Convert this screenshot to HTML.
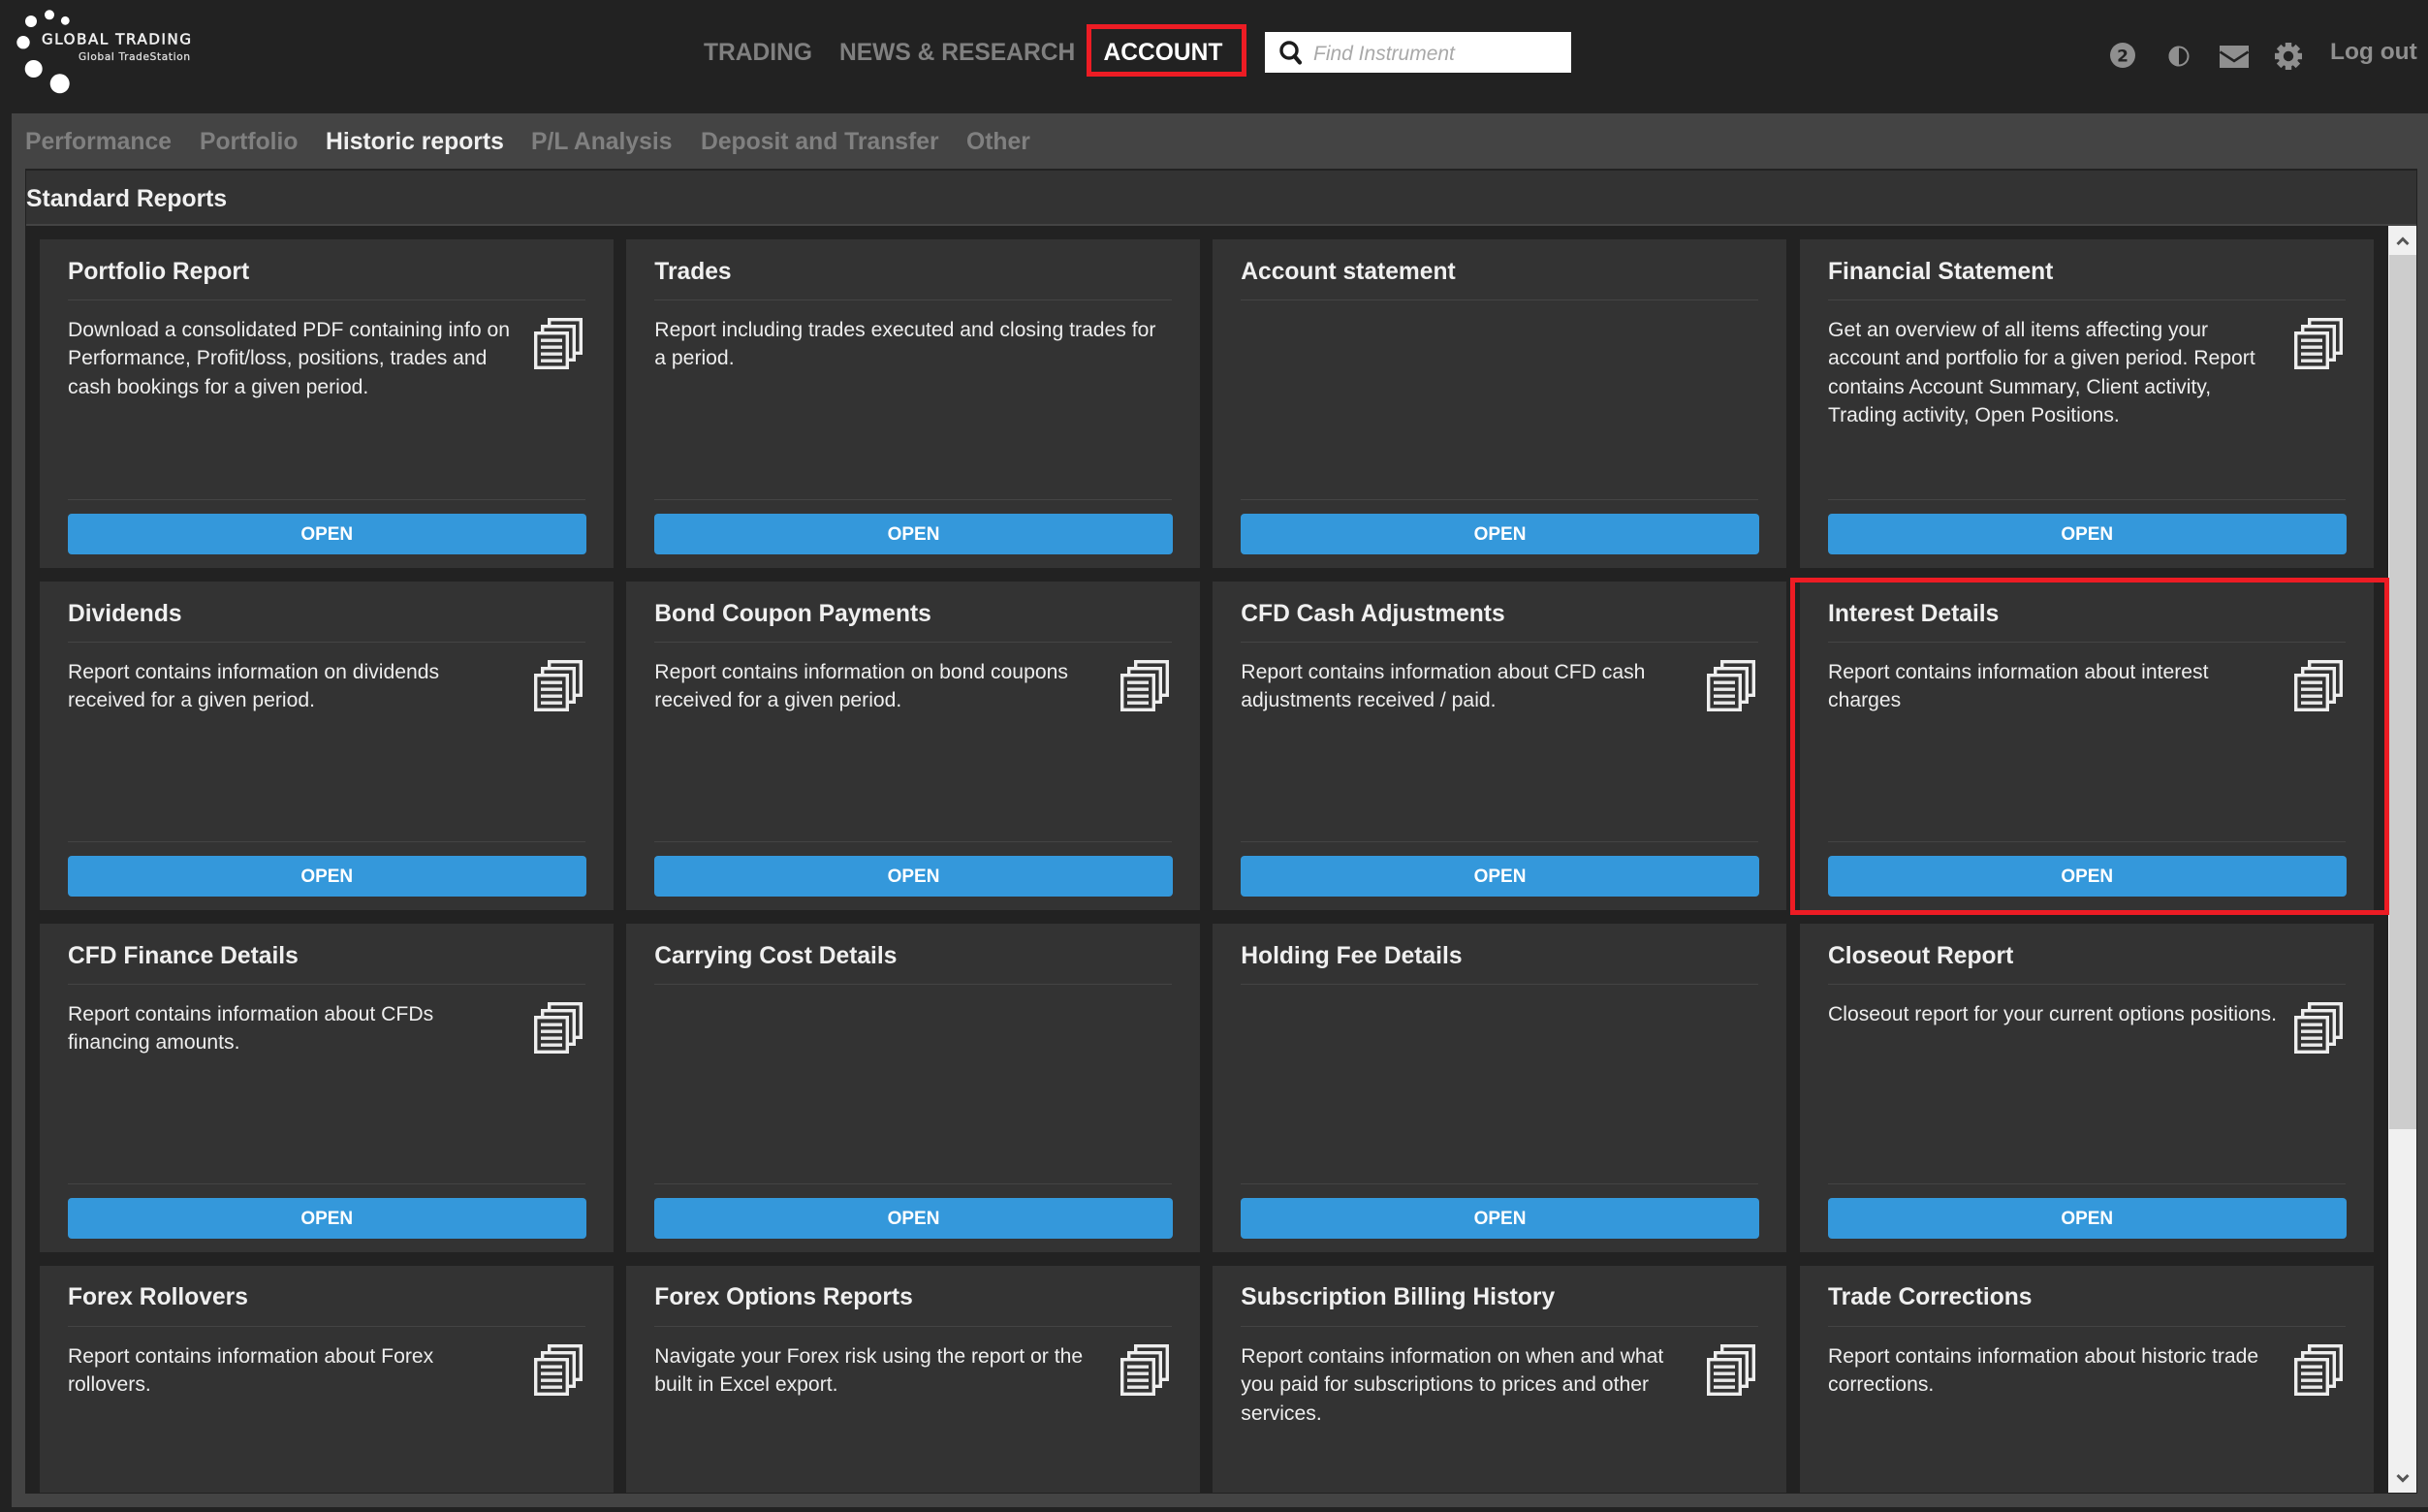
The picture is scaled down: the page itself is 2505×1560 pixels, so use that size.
<!DOCTYPE html>
<html lang="en"><head><meta charset="utf-8"><title>Historic reports</title>
<style>
html,body{margin:0;padding:0;width:2505px;height:1560px;overflow:hidden;background:#222;font-family:"Liberation Sans",Arial,sans-serif}
*{box-sizing:border-box}
.a{position:absolute;white-space:nowrap}
.nav{top:34.5px;height:40px;line-height:40px;font-size:24.6px;font-weight:bold;color:#808080}
.tab{top:127px;height:40px;line-height:40px;font-size:24.7px;font-weight:bold;color:#808080}
#panel{position:absolute;left:12px;top:117px;width:2493px;height:1438px;background:#444}
#box{position:absolute;left:26px;top:174px;width:2468px;height:1367px;background:#222;border:solid #222;border-width:2px 1px 1px 1px;overflow:hidden}
#boxh{position:absolute;left:0;top:0;width:2467px;height:57px;background:#333;border-bottom:2px solid #444}
#boxh span{position:absolute;left:0;top:10px;line-height:40px;font-size:24.7px;font-weight:bold;color:#f0f0f0}
.c{position:absolute;width:592px;height:339px;background:#333;color:#eee}
.r1{top:71px}.r2{top:424px}.r3{top:777px}.r4{top:1130px;height:234px}
.r4 .t{top:14.5px}
.k1{left:14px}.k2{left:619.3px}.k3{left:1224.3px}.k4{left:1830px}
.t{position:absolute;left:29px;top:15.5px;height:36px;line-height:36px;font-size:24.6px;font-weight:bold;white-space:nowrap;color:#f0f0f0}
.l1,.l2{position:absolute;left:29px;width:534px;height:1px;background:#444}
.l1{top:62px}.l2{top:268px}
.d{position:absolute;left:29px;top:78.5px;font-size:21.15px;line-height:29.5px;white-space:nowrap;color:#eee}
.b{position:absolute;left:29px;top:283px;width:534.5px;height:42px;line-height:43px;background:#3498db;border-radius:4px;color:#fff;text-align:center;font-size:19px;font-weight:bold}
.i{position:absolute;left:510px;top:81px;width:50px;height:53px}
.red{position:absolute;border:5px solid #ed1c24}
</style></head>
<body>
<svg class="a" style="left:0;top:0" width="220" height="110" viewBox="0 0 220 110">
<g fill="#fff"><circle cx="32" cy="22" r="6"/><circle cx="51" cy="15.3" r="5"/><circle cx="67.3" cy="21.3" r="4.4"/><circle cx="24" cy="43.7" r="6.7"/><circle cx="34.7" cy="71" r="9"/><circle cx="61.7" cy="86.3" r="10"/></g>
<text x="43" y="45.5" font-family="'DejaVu Sans','Liberation Sans',sans-serif" font-size="15" fill="#eee" stroke="#eee" stroke-width=".6" textLength="154" lengthAdjust="spacing">GLOBAL TRADING</text>
<text x="81" y="62" font-family="'DejaVu Sans','Liberation Sans',sans-serif" font-size="10.5" fill="#ddd" stroke="#ddd" stroke-width=".3" textLength="115" lengthAdjust="spacing">Global TradeStation</text>
</svg>

<div class="a nav" style="left:726px">TRADING</div>
<div class="a nav" style="left:866px">NEWS &amp; RESEARCH</div>
<div class="a nav" style="left:1138.5px;color:#fff">ACCOUNT</div>
<div class="red" style="left:1121px;top:25px;width:165px;height:54px"></div>

<div class="a" style="left:1305px;top:33px;width:316px;height:42px;background:#fff"></div>
<svg class="a" style="left:1318px;top:40px" width="28" height="28" viewBox="0 0 28 28"><circle cx="12" cy="12" r="8" fill="none" stroke="#1c1c1c" stroke-width="3.4"/><path d="M17.5 18 L23 24.5" stroke="#1c1c1c" stroke-width="4.2" stroke-linecap="round"/></svg>
<div class="a" style="left:1355px;top:35.5px;height:40px;line-height:40px;font-size:21px;font-style:italic;color:#a9a9a9">Find Instrument</div>

<svg class="a" style="left:2170px;top:37px" width="210" height="42" viewBox="0 0 210 42">
<circle cx="20" cy="20" r="13" fill="#8f8f8f"/>
<text x="20" y="26.5" text-anchor="middle" font-family="'DejaVu Sans',sans-serif" font-size="17" font-weight="bold" fill="#222">2</text>
<circle cx="78" cy="21" r="9.5" fill="#222" stroke="#8f8f8f" stroke-width="2"/>
<path d="M78 10.5 A10.5 10.5 0 0 0 78 31.5 Z" fill="#8f8f8f"/>
<rect x="120" y="10" width="30" height="23" fill="#8f8f8f"/>
<path d="M120.5 16.5 L135 26 L149.5 16.5" fill="none" stroke="#222" stroke-width="2.6"/>
<g transform="translate(191 21)" fill="#8f8f8f">
<circle r="10.5"/>
<rect x="-3.2" y="-14" width="6.4" height="7"/>
<rect x="-3.2" y="-14" width="6.4" height="7" transform="rotate(45)"/>
<rect x="-3.2" y="-14" width="6.4" height="7" transform="rotate(90)"/>
<rect x="-3.2" y="-14" width="6.4" height="7" transform="rotate(135)"/>
<rect x="-3.2" y="-14" width="6.4" height="7" transform="rotate(180)"/>
<rect x="-3.2" y="-14" width="6.4" height="7" transform="rotate(225)"/>
<rect x="-3.2" y="-14" width="6.4" height="7" transform="rotate(270)"/>
<rect x="-3.2" y="-14" width="6.4" height="7" transform="rotate(315)"/>
<circle r="5.2" fill="#222"/>
</g>
</svg>
<div class="a" style="left:2404px;top:34px;height:40px;line-height:40px;font-size:24.5px;font-weight:bold;color:#8f8f8f">Log out</div>

<div id="panel"></div>
<div class="a tab" style="left:26px">Performance</div>
<div class="a tab" style="left:206px">Portfolio</div>
<div class="a tab" style="left:336px;color:#f0f0f0">Historic reports</div>
<div class="a tab" style="left:548px">P/L Analysis</div>
<div class="a tab" style="left:723px">Deposit and Transfer</div>
<div class="a tab" style="left:997px">Other</div>

<svg width="0" height="0" style="position:absolute;left:0;top:0"><defs><symbol id="doc" viewBox="0 0 50 53">
<g fill="#333" stroke="#eee" stroke-width="3.4"><rect x="15.7" y="1.7" width="32.6" height="34.6"/><rect x="8.7" y="8.7" width="32.6" height="34.6"/><rect x="1.7" y="15.7" width="32.6" height="35.6"/></g>
<g fill="#e8e8e8"><rect x="7" y="21.5" width="22" height="3.4"/><rect x="7" y="28.5" width="22" height="3.4"/><rect x="7" y="35.5" width="22" height="3.4"/><rect x="7" y="42.5" width="22" height="3.4"/></g>
</symbol></defs></svg>

<div id="box">
<div id="boxh"><span>Standard Reports</span></div>

<div class="c r1 k1"><div class="t">Portfolio Report</div><div class="l1"></div><div class="d">Download a consolidated PDF containing info on<br>Performance, Profit/loss, positions, trades and<br>cash bookings for a given period.</div><svg class="i"><use href="#doc"/></svg><div class="l2"></div><div class="b">OPEN</div></div>
<div class="c r1 k2"><div class="t">Trades</div><div class="l1"></div><div class="d">Report including trades executed and closing trades for<br>a period.</div><div class="l2"></div><div class="b">OPEN</div></div>
<div class="c r1 k3"><div class="t">Account statement</div><div class="l1"></div><div class="l2"></div><div class="b">OPEN</div></div>
<div class="c r1 k4"><div class="t">Financial Statement</div><div class="l1"></div><div class="d">Get an overview of all items affecting your<br>account and portfolio for a given period. Report<br>contains Account Summary, Client activity,<br>Trading activity, Open Positions.</div><svg class="i"><use href="#doc"/></svg><div class="l2"></div><div class="b">OPEN</div></div>

<div class="c r2 k1"><div class="t">Dividends</div><div class="l1"></div><div class="d">Report contains information on dividends<br>received for a given period.</div><svg class="i"><use href="#doc"/></svg><div class="l2"></div><div class="b">OPEN</div></div>
<div class="c r2 k2"><div class="t">Bond Coupon Payments</div><div class="l1"></div><div class="d">Report contains information on bond coupons<br>received for a given period.</div><svg class="i"><use href="#doc"/></svg><div class="l2"></div><div class="b">OPEN</div></div>
<div class="c r2 k3"><div class="t">CFD Cash Adjustments</div><div class="l1"></div><div class="d">Report contains information about CFD cash<br>adjustments received / paid.</div><svg class="i"><use href="#doc"/></svg><div class="l2"></div><div class="b">OPEN</div></div>
<div class="c r2 k4"><div class="t">Interest Details</div><div class="l1"></div><div class="d">Report contains information about interest<br>charges</div><svg class="i"><use href="#doc"/></svg><div class="l2"></div><div class="b">OPEN</div></div>

<div class="c r3 k1"><div class="t">CFD Finance Details</div><div class="l1"></div><div class="d">Report contains information about CFDs<br>financing amounts.</div><svg class="i"><use href="#doc"/></svg><div class="l2"></div><div class="b">OPEN</div></div>
<div class="c r3 k2"><div class="t">Carrying Cost Details</div><div class="l1"></div><div class="l2"></div><div class="b">OPEN</div></div>
<div class="c r3 k3"><div class="t">Holding Fee Details</div><div class="l1"></div><div class="l2"></div><div class="b">OPEN</div></div>
<div class="c r3 k4"><div class="t">Closeout Report</div><div class="l1"></div><div class="d">Closeout report for your current options positions.</div><svg class="i"><use href="#doc"/></svg><div class="l2"></div><div class="b">OPEN</div></div>

<div class="c r4 k1"><div class="t">Forex Rollovers</div><div class="l1"></div><div class="d">Report contains information about Forex<br>rollovers.</div><svg class="i"><use href="#doc"/></svg></div>
<div class="c r4 k2"><div class="t">Forex Options Reports</div><div class="l1"></div><div class="d">Navigate your Forex risk using the report or the<br>built in Excel export.</div><svg class="i"><use href="#doc"/></svg></div>
<div class="c r4 k3"><div class="t">Subscription Billing History</div><div class="l1"></div><div class="d">Report contains information on when and what<br>you paid for subscriptions to prices and other<br>services.</div><svg class="i"><use href="#doc"/></svg></div>
<div class="c r4 k4"><div class="t">Trade Corrections</div><div class="l1"></div><div class="d">Report contains information about historic trade<br>corrections.</div><svg class="i"><use href="#doc"/></svg></div>

<div style="position:absolute;left:2437px;top:57px;width:30px;height:1307px;background:#f0f0f0"></div>
<div style="position:absolute;left:2438px;top:87px;width:28px;height:902px;background:#cdcdcd"></div>
<svg style="position:absolute;left:2437px;top:57px" width="30" height="30" viewBox="0 0 30 30"><path d="M9.5 19 L15 13.5 L20.5 19" fill="none" stroke="#555" stroke-width="3"/></svg>
<svg style="position:absolute;left:2437px;top:1334px" width="30" height="30" viewBox="0 0 30 30"><path d="M9.5 12 L15 17.5 L20.5 12" fill="none" stroke="#555" stroke-width="3"/></svg>
</div>

<div class="red" style="left:1847px;top:596px;width:618px;height:348px"></div>
</body></html>
